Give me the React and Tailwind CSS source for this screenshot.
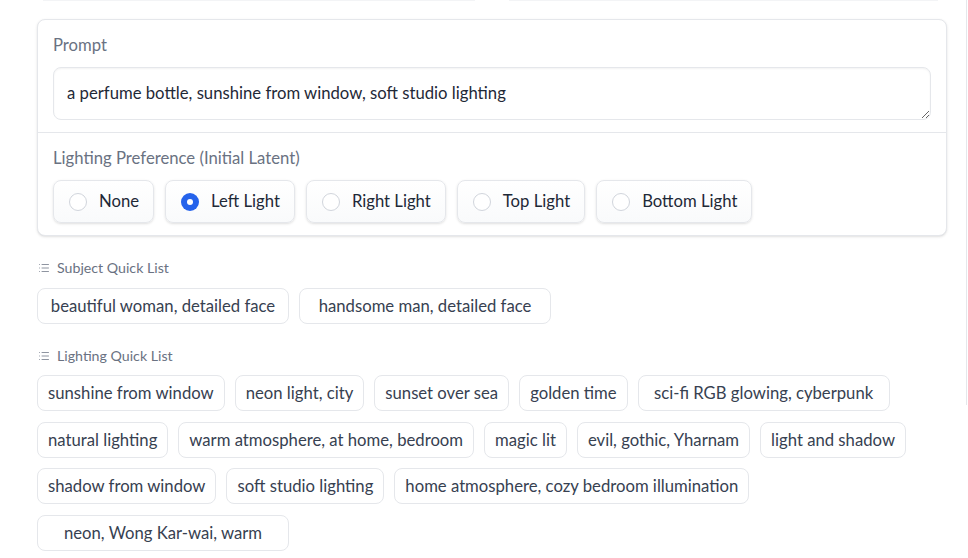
import { List } from 'lucide-react';

const lightOptions = ['None', 'Left Light', 'Right Light', 'Top Light', 'Bottom Light'];

const subjects = ['beautiful woman, detailed face', 'handsome man, detailed face'];

const lightings = [
  'sunshine from window',
  'neon light, city',
  'sunset over sea',
  'golden time',
  'sci-fi RGB glowing, cyberpunk',
  'natural lighting',
  'warm atmosphere, at home, bedroom',
  'magic lit',
  'evil, gothic, Yharnam',
  'light and shadow',
  'shadow from window',
  'soft studio lighting',
  'home atmosphere, cozy bedroom illumination',
  'neon, Wong Kar-wai, warm',
];

// samples that get the wider min width in the reference
const wide = [
  'beautiful woman, detailed face',
  'handsome man, detailed face',
  'sci-fi RGB glowing, cyberpunk',
  'neon, Wong Kar-wai, warm',
];

function QuickList({ title, items, gapTop }) {
  return (
    <div>
      <div className="flex items-center gap-[7px] h-5 text-[14.2px] text-gray-500 pl-[1px]">
        <List className="w-3 h-3" strokeWidth={1.5} />
        <span>{title}</span>
      </div>
      <div className={`flex flex-wrap gap-x-[10px] gap-y-[10.5px] w-[900px] ${gapTop}`}>
        {items.map((it) => (
          <button
            key={it}
            className={`${wide.includes(it) ? 'min-w-[252px]' : ''} h-[36px] px-[10px] border border-gray-200 rounded-lg bg-white text-[16.7px] leading-6 text-[#374151] text-center whitespace-nowrap`}
          >
            {it}
          </button>
        ))}
      </div>
    </div>
  );
}

export default function App() {
  const selected = 'Left Light';

  return (
    <div className="flex bg-white w-[968px] h-[558px] overflow-hidden" style={{ fontFamily: 'Lato, "Open Sans", sans-serif' }}>
      <div className="w-[966px] shrink-0">
        <div className="flex h-[1px]">
          <div className="ml-[43px] w-[432px] bg-gray-100" />
          <div className="ml-[34px] w-[429px] bg-gray-100" />
        </div>

        <div className="ml-[37px] mt-[18px] w-[910px] border border-gray-200 rounded-lg shadow-sm bg-white">
          <div className="px-[15px] pt-[13px] pb-[12px]">
            <div className="text-[16.7px] leading-6 text-gray-500 mb-[10px]">Prompt</div>
            <textarea
              defaultValue="a perfume bottle, sunshine from window, soft studio lighting"
              className="block w-full h-[53px] px-[13px] py-[13px] border border-gray-200 rounded-lg text-[16.7px] leading-6 text-[#1f2937] resize-y shadow-[inset_0_1px_2px_rgba(0,0,0,0.05)] outline-none"
              style={{ fontFamily: 'inherit' }}
            />
          </div>
          <div className="border-t border-gray-200 px-[15px] pt-[13px] pb-[12px]">
            <div className="text-[16.7px] leading-6 text-gray-500 mb-[10px]">Lighting Preference (Initial Latent)</div>
            <div className="flex gap-[11px]">
              {lightOptions.map((opt) => {
                const on = opt === selected;
                return (
                  <label
                    key={opt}
                    className="flex items-center h-[43px] pl-[15px] pr-[14px] pt-[1px] border border-gray-200 rounded-lg bg-linear-to-b from-white to-gray-50 shadow-sm text-[16.7px] text-[#1f2937]"
                  >
                    {on ? (
                      <span className="w-[18px] h-[18px] rounded-full bg-[#2563eb] flex items-center justify-center">
                        <span className="w-[6px] h-[6px] rounded-full bg-white" />
                      </span>
                    ) : (
                      <span className="w-[18px] h-[18px] rounded-full border border-gray-300 bg-white" />
                    )}
                    <span className="ml-3">{opt}</span>
                  </label>
                );
              })}
            </div>
          </div>
        </div>

        <div className="ml-[37px] mt-[22px]">
          <QuickList title="Subject Quick List" items={subjects} gapTop="mt-[10px]" />
        </div>
        <div className="ml-[37px] mt-[22px]">
          <QuickList title="Lighting Quick List" items={lightings} gapTop="mt-[9px]" />
        </div>
      </div>
      <div className="w-[2px] h-[405px] border-l border-gray-200" />
    </div>
  );
}
